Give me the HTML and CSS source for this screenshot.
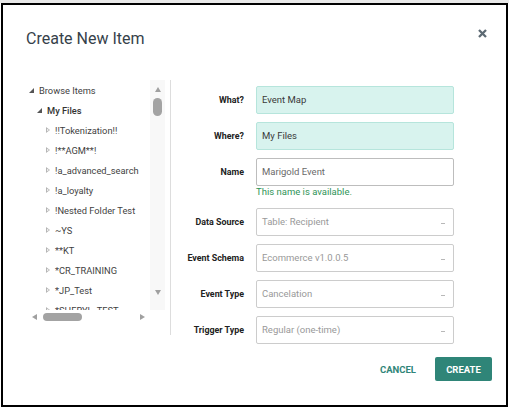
FILE: index.html
```html
<!DOCTYPE html>
<html lang="en">
<head>
<meta charset="utf-8">
<title>Create New Item</title>
<link rel="stylesheet" href="styles.css">
</head>
<body>
<div class="topband"></div>
<div class="dialog">
  <header class="head">
    <h1 class="title">Create New Item</h1>
    <button class="close" aria-label="Close">
      <svg width="9" height="9" viewBox="0 0 9 9"><path d="M1 1 L8 8 M8 1 L1 8" stroke="#5d6a73" stroke-width="2.3" stroke-linecap="butt"/></svg>
    </button>
  </header>
  <div class="main">
    <div class="tree">
      <div class="viewport">
        <ul class="nodes">
          <li class="node lvl0"><span class="tw open"></span><span class="lbl">Browse Items</span></li>
          <li class="node lvl1"><span class="tw open"></span><span class="lbl strong">My Files</span></li>
          <li class="node lvl2"><span class="tw closed"></span><span class="lbl">!!Tokenization!!</span></li>
          <li class="node lvl2"><span class="tw closed"></span><span class="lbl">!**AGM**!</span></li>
          <li class="node lvl2"><span class="tw closed"></span><span class="lbl">!a_advanced_search</span></li>
          <li class="node lvl2"><span class="tw closed"></span><span class="lbl">!a_loyalty</span></li>
          <li class="node lvl2"><span class="tw closed"></span><span class="lbl">!Nested Folder Test</span></li>
          <li class="node lvl2"><span class="tw closed"></span><span class="lbl">~YS</span></li>
          <li class="node lvl2"><span class="tw closed"></span><span class="lbl">**KT</span></li>
          <li class="node lvl2"><span class="tw closed"></span><span class="lbl">*CR_TRAINING</span></li>
          <li class="node lvl2"><span class="tw closed"></span><span class="lbl">*JP_Test</span></li>
          <li class="node lvl2"><span class="tw closed"></span><span class="lbl">*SHERYL_TEST</span></li>
        </ul>
      </div>
      <div class="vscroll">
        <span class="arr up"></span>
        <span class="vthumb"></span>
        <span class="fill"></span>
        <span class="arr down"></span>
      </div>
      <div class="hscroll">
        <span class="arr left"></span>
        <span class="hthumb"></span>
        <span class="fill"></span>
        <span class="arr right"></span>
      </div>
    </div>
    <div class="form">
      <div class="label">What?</div>
      <div class="field teal">Event Map</div>
      <div class="label">Where?</div>
      <div class="field teal">My Files</div>
      <div class="label">Name</div>
      <div class="cell">
        <div class="field plain">Marigold Event</div>
        <div class="ok">This name is available.</div>
      </div>
      <div class="label">Data Source</div>
      <div class="field select">Table: Recipient<span class="caret"></span></div>
      <div class="label">Event Schema</div>
      <div class="field select">Ecommerce v1.0.0.5<span class="caret"></span></div>
      <div class="label">Event Type</div>
      <div class="field select">Cancelation<span class="caret"></span></div>
      <div class="label">Trigger Type</div>
      <div class="field select">Regular (one-time)<span class="caret"></span></div>
    </div>
  </div>
  <footer class="foot">
    <button class="btn cancel">CANCEL</button>
    <button class="btn create">CREATE</button>
  </footer>
</div>
</body>
</html>
```
FILE: styles.css
```css
* { box-sizing: border-box; }
html, body {
  margin: 0;
  padding: 0;
  background: #ffffff;
  font-family: Roboto, "Liberation Sans", Arial, sans-serif;
}
.topband {
  height: 3px;
  background: #e8e8e8;
}
.dialog {
  width: 507px;
  height: 404px;
  margin-left: 1px;
  border: 2px solid #000;
  background: #fff;
  display: flex;
  flex-direction: column;
}
.head {
  height: 75px;
  display: flex;
  justify-content: space-between;
  align-items: flex-start;
  padding: 24px 19px 0 23px;
}
.title {
  margin: 0;
  font-size: 16px;
  line-height: 20px;
  font-weight: 400;
  color: #36414a;
}
.close {
  margin: 0;
  padding: 0;
  border: 0;
  background: none;
  display: block;
  line-height: 0;
}
.close svg { display: block; }

.main {
  display: flex;
  align-items: flex-start;
  margin-left: 22px;
}
.tree {
  width: 146px;
  height: 255px;
  border-right: 1px solid #dddddd;
  display: grid;
  grid-template-columns: 125px 15px;
  grid-template-rows: 230px 13px;
}
.viewport {
  overflow: hidden;
}
.nodes {
  list-style: none;
  margin: 0;
  padding: 0;
}
.node {
  height: 20px;
  display: flex;
  align-items: center;
  font-size: 9.3px;
  color: #3f3f3f;
  white-space: nowrap;
}
.lvl0 { padding-left: 4px; }
.lvl1 { padding-left: 12px; }
.lvl2 { padding-left: 21px; }
.tw {
  display: inline-block;
  width: 10px;
  height: 8px;
  position: relative;
  flex: none;
}
.lvl2 .tw { width: 9px; }
.tw.open::before {
  content: "";
  position: absolute;
  left: 0;
  top: 2px;
  border-style: solid;
  border-width: 0 0 5px 5px;
  border-color: transparent transparent #555 transparent;
}
.tw.closed::before {
  content: "";
  position: absolute;
  left: 0;
  top: 1px;
  width: 0;
  height: 0;
  border-style: solid;
  border-width: 3px 0 3px 4px;
  border-color: transparent transparent transparent #b5b5b5;
}
.tw.closed::after {
  content: "";
  position: absolute;
  left: 1px;
  top: 2.5px;
  width: 0;
  height: 0;
  border-style: solid;
  border-width: 1.5px 0 1.5px 2px;
  border-color: transparent transparent transparent #fff;
}
.lbl.strong { font-weight: 500; color: #333; }

.vscroll {
  background: #f8f8f8;
  display: flex;
  flex-direction: column;
  align-items: center;
}
.hscroll {
  display: flex;
  align-items: center;
}
.fill { flex: 1; }
.arr {
  display: block;
  width: 0;
  height: 0;
  border-style: solid;
}
.arr.up {
  margin-top: 7px;
  border-width: 0 3.5px 5px 3.5px;
  border-color: transparent transparent #a0a0a0 transparent;
}
.arr.down {
  margin-bottom: 15px;
  border-width: 5px 3.5px 0 3.5px;
  border-color: #a0a0a0 transparent transparent transparent;
}
.arr.left {
  margin-left: 7px;
  border-width: 3.5px 5px 3.5px 0;
  border-color: transparent #a0a0a0 transparent transparent;
}
.arr.right {
  margin-right: 5px;
  border-width: 3.5px 0 3.5px 5px;
  border-color: transparent transparent transparent #a0a0a0;
}
.vthumb {
  display: block;
  margin-top: 6px;
  width: 9px;
  height: 18px;
  border-radius: 5px;
  background: #a3a3a3;
}
.hthumb {
  display: block;
  margin-left: 6px;
  width: 39px;
  height: 8px;
  border-radius: 4px;
  background: #a3a3a3;
}

.form {
  display: grid;
  grid-template-columns: 73px 198px;
  column-gap: 12px;
  row-gap: 8px;
  padding-top: 6px;
  align-items: start;
}
.label {
  font-size: 8.9px;
  font-weight: 700;
  line-height: 28px;
  text-align: right;
  color: #222;
  white-space: nowrap;
}
.field {
  position: relative;
  height: 28px;
  border: 1px solid #cccccc;
  border-radius: 2px;
  padding-left: 5px;
  font-size: 9.5px;
  line-height: 26px;
  color: #999;
  background: #fff;
}
.field.teal {
  background: #d8f3ee;
  border-color: #b6e5dc;
  color: #3a3a3a;
}
.field.plain { color: #6a6a6a; border-color: #bdbdbd; }
.caret {
  position: absolute;
  right: 8px;
  top: 14px;
  width: 4px;
  height: 1px;
  background: #b8b8b8;
}
.ok {
  font-size: 9.5px;
  line-height: 12px;
  color: #2f9457;
  margin-bottom: 2px;
}

.foot {
  display: flex;
  justify-content: flex-end;
  align-items: center;
  margin-top: 13px;
  padding-right: 14px;
}
.btn {
  font-family: Roboto, "Liberation Sans", Arial, sans-serif;
  font-size: 9.5px;
  font-weight: 700;
  border: 0;
  padding: 0;
  cursor: pointer;
}
.cancel {
  background: none;
  color: #2f8578;
  margin-right: 19px;
  height: 24px;
}
.create {
  width: 57px;
  height: 24px;
  border-radius: 2px;
  background: #2f8578;
  color: #fff;
}
```
